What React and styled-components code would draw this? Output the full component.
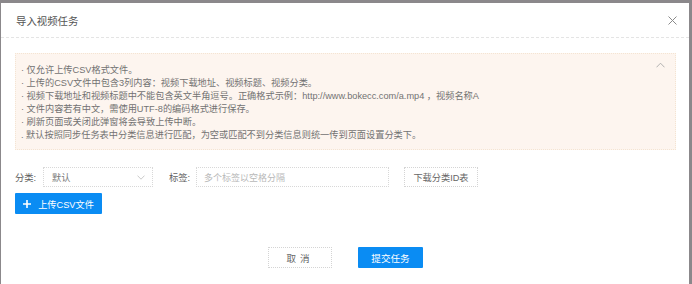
import React from "react";
import styled, { createGlobalStyle } from "styled-components";

const Global = createGlobalStyle`
  html, body { margin: 0; padding: 0; }
  body {
    background: #8b888b;
    font-family: "Liberation Sans", "Noto Sans CJK SC", sans-serif;
    width: 692px; height: 284px; overflow: hidden;
  }
`;

const Backdrop = styled.div`
  width: 692px;
  height: 284px;
  padding: 3px 3px 0 1px;
  box-sizing: border-box;
  display: flex;
`;

const Modal = styled.div`
  flex: 1;
  background: #fff;
  display: flex;
  flex-direction: column;
`;

const Header = styled.div`
  height: 34px;
  display: flex;
  align-items: center;
  justify-content: space-between;
  padding: 0 12px 0 15px;
  border-bottom: 1px dashed #e4e4e4;
`;

const Title = styled.div`
  font-size: 10.4px;
  color: #555;
`;

const Close = styled.div`
  width: 9px;
  height: 9px;
  display: flex;
  color: #8a8a8a;
`;

const Body = styled.div`
  padding: 15px 13px 0 14px;
  display: flex;
  flex-direction: column;
`;

const Alert = styled.div`
  position: relative;
  background: #fdf5ef;
  border: 1px dotted #f4e4d2;
  padding: 10px 8px 6px 5px;
  height: 97px;
  box-sizing: border-box;
`;

const Line = styled.div`
  font-size: 9.2px;
  line-height: 13.1px;
  color: #727272;
  white-space: nowrap;
`;

const Collapse = styled.div`
  position: absolute;
  right: 10px;
  top: 8px;
  width: 9px;
  height: 6px;
  color: #aaa;
  display: flex;
`;

const Row = styled.div`
  display: flex;
  align-items: center;
  margin-top: 17px;
  height: 20px;
`;

const Label = styled.span`
  font-size: 9.3px;
  color: #5e5e5e;
  width: ${p => p.$w}px;
  flex-shrink: 0;
`;

const Select = styled.div`
  width: 110px;
  height: 20px;
  box-sizing: border-box;
  border: 1px dotted #d8d8d8;
  display: flex;
  align-items: center;
  justify-content: space-between;
  padding: 0 7px 0 8px;
  font-size: 9.2px;
  color: #777;
  margin-right: 16px;
`;

const Input = styled.div`
  width: 193px;
  height: 20px;
  box-sizing: border-box;
  border: 1px dotted #d8d8d8;
  display: flex;
  align-items: center;
  padding: 0 7px;
  font-size: 9px;
  color: #b8b8b8;
  margin-right: 15px;
`;

const GhostButton = styled.div`
  height: ${p => p.$h || 20}px;
  width: ${p => p.$w}px;
  box-sizing: border-box;
  border: 1px dotted #d4d4d4;
  display: flex;
  align-items: center;
  justify-content: center;
  font-size: ${p => p.$fs || 9.2}px;
  color: #666;
  letter-spacing: ${p => p.$ls || 0}px;
`;

const PrimaryButton = styled.div`
  height: ${p => p.$h}px;
  width: ${p => p.$w}px;
  box-sizing: border-box;
  background: #0a8cf3;
  color: #fff;
  display: flex;
  align-items: center;
  justify-content: center;
  gap: 7px;
  font-size: ${p => p.$fs || 9.2}px;
  border-radius: 1px;
`;

const UploadRow = styled.div`
  margin-top: 6px;
  display: flex;
`;

const Footer = styled.div`
  display: flex;
  justify-content: center;
  gap: 26px;
  margin-top: 33px;
`;

const lines = [
  "· 仅允许上传CSV格式文件。",
  "· 上传的CSV文件中包含3列内容：视频下载地址、视频标题、视频分类。",
  "· 视频下载地址和视频标题中不能包含英文半角逗号。正确格式示例：http://www.bokecc.com/a.mp4 ，视频名称A",
  "· 文件内容若有中文，需使用UTF-8的编码格式进行保存。",
  "· 刷新页面或关闭此弹窗将会导致上传中断。",
  ". 默认按照同步任务表中分类信息进行匹配，为空或匹配不到分类信息则统一传到页面设置分类下。",
];

export default function App() {
  return (
    <>
      <Global />
      <Backdrop>
        <Modal>
          <Header>
            <Title>导入视频任务</Title>
            <Close>
              <svg width="9" height="9" viewBox="0 0 9 9">
                <path d="M0.5 0.5L8.5 8.5M8.5 0.5L0.5 8.5" stroke="currentColor" strokeWidth="1" fill="none" />
              </svg>
            </Close>
          </Header>
          <Body>
            <Alert>
              {lines.map((l, i) => (
                <Line key={i}>{l}</Line>
              ))}
              <Collapse>
                <svg width="9" height="6" viewBox="0 0 9 6">
                  <path d="M0.5 5.3L4.5 1.2L8.5 5.3" stroke="currentColor" strokeWidth="0.9" fill="none" />
                </svg>
              </Collapse>
            </Alert>
            <Row>
              <Label $w={28}>分类:</Label>
              <Select>
                <span>默认</span>
                <svg width="8" height="5" viewBox="0 0 8 5">
                  <path d="M0.5 0.6L4 4.2L7.5 0.6" stroke="#c4c4c4" strokeWidth="0.9" fill="none" />
                </svg>
              </Select>
              <Label $w={27}>标签:</Label>
              <Input>多个标签以空格分隔</Input>
              <GhostButton $w={74}>下载分类ID表</GhostButton>
            </Row>
            <UploadRow>
              <PrimaryButton $w={87} $h={21}>
                <svg width="8" height="8" viewBox="0 0 8 8">
                  <path d="M4 0V8M0 4H8" stroke="#fff" strokeWidth="1.6" />
                </svg>
                上传CSV文件
              </PrimaryButton>
            </UploadRow>
            <Footer>
              <GhostButton $w={64} $h={21} $ls={4} $fs={9.6}>取消</GhostButton>
              <PrimaryButton $w={65} $h={21} $fs={9.6}>提交任务</PrimaryButton>
            </Footer>
          </Body>
        </Modal>
      </Backdrop>
    </>
  );
}
